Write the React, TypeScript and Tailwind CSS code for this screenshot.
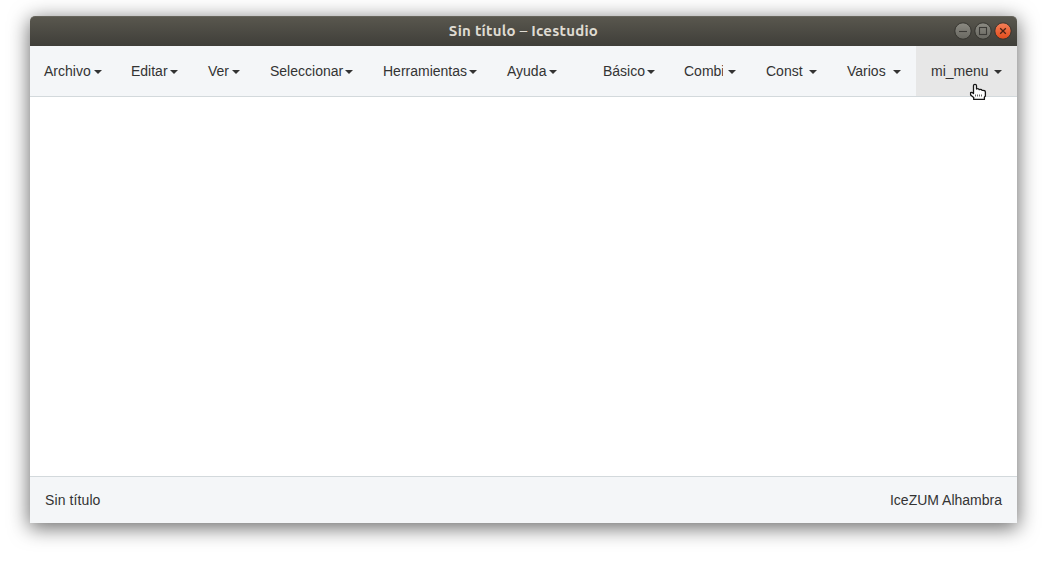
type MenuItem = { label: string; item: string; text: string; active?: boolean };

const menus: MenuItem[] = [
  { label: "Archivo", item: "w-[87px]", text: "w-[50px]" },
  { label: "Editar", item: "w-[77px]", text: "w-[39px]" },
  { label: "Ver", item: "w-[62px]", text: "w-[24px]" },
  { label: "Seleccionar", item: "w-[113px]", text: "w-[75px]" },
  { label: "Herramientas", item: "w-[124px]", text: "w-[86px]" },
  { label: "Ayuda", item: "w-[79px]", text: "w-[42px]" },
];

const collections: MenuItem[] = [
  { label: "Básico", item: "w-[81px]", text: "w-[44px]" },
  { label: "Combi", item: "w-[82px]", text: "w-[44px]" },
  { label: "Const", item: "w-[81px]", text: "w-[43px]" },
  { label: "Varios", item: "w-[69px]", text: "w-[46px]" },
  { label: "mi_menu", item: "w-[101px] pl-[15px]", text: "w-[63px]", active: true },
];

function Menu({ label, item, text, active }: MenuItem) {
  const clipped = label === "Combi";
  return (
    <button
      className={`flex h-full shrink-0 items-center text-left ${item} ${active ? "bg-[#e7e7e7]" : ""}`}
    >
      <span className={`block shrink-0 whitespace-nowrap ${text}`}>
        <span className={clipped ? "block w-[39px] overflow-hidden" : "block"}>{label}</span>
      </span>
      <span className="mt-[2px] block h-0 w-0 shrink-0 border-x-4 border-t-4 border-x-transparent border-t-[#333333]" />
    </button>
  );
}

function WindowButton({ kind }: { kind: "min" | "max" | "close" }) {
  const close = kind === "close";
  return (
    <svg width="18" height="18" viewBox="0 0 18 18" className="block">
      <defs>
        <linearGradient id={`face-${kind}`} x1="0" y1="0" x2="0" y2="1">
          <stop offset="0" stopColor={close ? "#f58059" : "#8c8b83"} />
          <stop offset="1" stopColor={close ? "#e24b1b" : "#686760"} />
        </linearGradient>
      </defs>
      <circle cx="9" cy="9" r="8.2" fill={`url(#face-${kind})`} stroke="#35342f" strokeWidth="1" />
      <g fill="none" stroke={close ? "#4a2114" : "#3c3b37"} strokeWidth="1.1">
        {kind === "min" && <path d="M5 9.5h8" />}
        {kind === "max" && <rect x="5.5" y="5.5" width="7" height="7" />}
        {close && <path d="M6.2 6.2l5.6 5.6M11.8 6.2l-5.6 5.6" strokeWidth="1.3" />}
      </g>
    </svg>
  );
}

function HandCursor() {
  return (
    <svg
      width="18"
      height="18"
      viewBox="0 0 18 18"
      className="pointer-events-none absolute left-[939px] top-[67px]"
    >
      <path
        d="M4.5 2.7Q4.5 1.3 6 1.3Q7.5 1.3 7.5 2.7V6Q9.8 5.2 10.3 6.7Q12.5 6 13 7.4Q16.4 7 16.4 9.2V13L15.4 14.2V16.4H4.7V14.4L1.6 12V9.6Q2.8 8.8 4.5 10.6Z"
        fill="#fff"
        stroke="#161616"
        strokeWidth="1.3"
        strokeLinejoin="round"
      />
      <path d="M6 12.5h1M8 12.5h1M10 12.5h1M12 12.5h1" stroke="#666" strokeWidth="2" />
    </svg>
  );
}

export default function App() {
  return (
    <div className="h-[567px] w-[1053px] overflow-hidden bg-white pl-[30px] pt-4 font-['Liberation_Sans',Arial,sans-serif] text-[14px] leading-5 text-[#333333]">
      <main className="relative flex h-[507px] w-[987px] flex-col rounded-t-[5px] bg-white shadow-[0_4px_20px_1px_rgba(0,0,0,0.58)]">
        <header className="grid h-[30px] shrink-0 grid-cols-[1fr_auto_1fr] items-center rounded-t-[5px] border-t border-[#66645b] bg-linear-to-b from-[#59574e] to-[#3f3e39] pb-[2px] pr-[5px]">
          <span />
          <h1 className="ml-[5px] whitespace-nowrap font-['Ubuntu','Noto_Sans',sans-serif] text-[15px] font-bold leading-none tracking-[0.25px] text-[#dfdbd2]">
            Sin título <span className="font-normal">–</span> Icestudio
          </h1>
          <div className="flex justify-end gap-[2px]">
            <WindowButton kind="min" />
            <WindowButton kind="max" />
            <WindowButton kind="close" />
          </div>
        </header>
        <nav className="flex h-[51px] shrink-0 justify-between border-b border-[#d3d9dc] bg-[#f4f6f8]">
          <div className="flex pl-[14px]">
            {menus.map((menu) => (
              <Menu key={menu.label} {...menu} />
            ))}
          </div>
          <div className="flex">
            {collections.map((menu) => (
              <Menu key={menu.label} {...menu} />
            ))}
          </div>
        </nav>
        <section className="min-h-0 flex-1 bg-white" />
        <footer className="flex h-[47px] shrink-0 items-center justify-between border-t border-[#d3d9dc] bg-[#f4f6f8] pl-[15px] pr-[15px]">
          <span className="tracking-[0.1px]">Sin título</span>
          <span>IceZUM Alhambra</span>
        </footer>
        <HandCursor />
      </main>
    </div>
  );
}
